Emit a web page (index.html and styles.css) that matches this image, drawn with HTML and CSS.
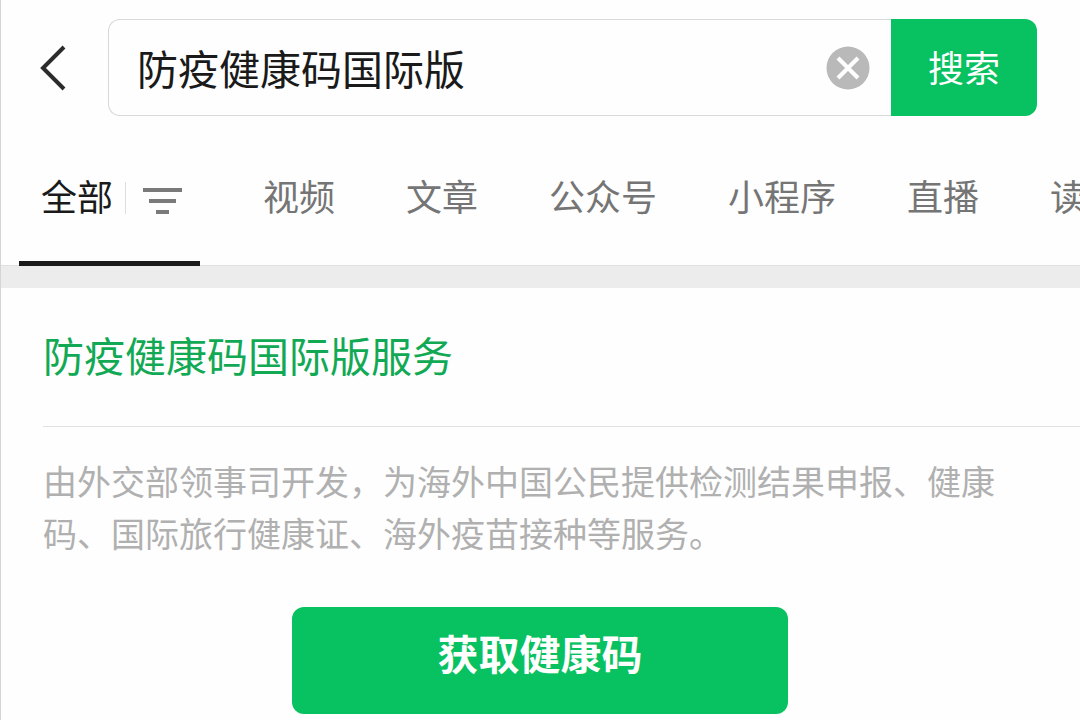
FILE: index.html
```
<!DOCTYPE html>
<html lang="zh-CN">
<head>
    <meta charset="UTF-8">
    <meta name="viewport" content="width=device-width, initial-scale=1.0">
    <title>防疫健康码国际版</title>
    <link rel="stylesheet" href="styles.css">
</head>
<body>
    <!-- Search bar -->
    <header class="header">
        <button class="back" type="button" aria-label="返回">
            <svg width="28" height="48" viewBox="0 0 28 48" fill="none" stroke="#2b2b2b" stroke-width="4">
                <path d="M26 3 L5 24 L26 45"/>
            </svg>
        </button>
        <form class="search">
            <div class="search-box">
                <input class="search-input" type="text" aria-label="搜索" value="防疫健康码国际版">
                <button class="clear" type="button" aria-label="清除">
                    <svg width="44" height="44" viewBox="0 0 44 44">
                        <circle cx="22" cy="22" r="21.5" fill="#b9b9b9"/>
                        <path d="M12 12 L32 32 M32 12 L12 32" stroke="#fff" stroke-width="4"/>
                    </svg>
                </button>
            </div>
            <button class="search-btn" type="button">搜索</button>
        </form>
    </header>

    <!-- Tabs -->
    <nav class="tabs">
        <a class="tab active" href="#">
            <span>全部</span>
            <span class="divider"></span>
            <svg width="39" height="26" viewBox="0 0 39 26" fill="#7a7a7a">
                <rect x="0" y="0" width="39" height="4"/>
                <rect x="6" y="11" width="27" height="4"/>
                <rect x="13" y="22" width="13" height="4"/>
            </svg>
        </a>
        <a class="tab" href="#">视频</a>
        <a class="tab" href="#">文章</a>
        <a class="tab" href="#">公众号</a>
        <a class="tab" href="#">小程序</a>
        <a class="tab" href="#">直播</a>
        <a class="tab" href="#">读书</a>
    </nav>

    <!-- Result -->
    <main class="results">
        <section class="card">
            <h2 class="card-title"><a href="#">防疫健康码国际版服务</a></h2>
            <div class="card-body">
                <p class="card-desc">由外交部领事司开发，为海外中国公民提供检测结果申报、健康码、国际旅行健康证、海外疫苗接种等服务。</p>
                <button class="card-btn" type="button">获取健康码</button>
            </div>
        </section>
    </main>
</body>
</html>
```
FILE: styles.css
```
* {
    box-sizing: border-box;
}

body {
    font-family: "Noto Sans CJK SC", sans-serif;
    background-color: #fefefe;
    color: #1a1a1a;
    margin: 0;
    min-height: 100vh;
    border-left: 1px solid #d4d4d4;
    overflow-x: hidden;
}

button {
    font-family: inherit;
    border: none;
    padding: 0;
    cursor: pointer;
}

a {
    color: inherit;
    text-decoration: none;
}

svg {
    display: block;
}

.header {
    display: flex;
    padding: 19px 43px 0 37px;
}

.back {
    width: 70px;
    background: none;
}

.search {
    flex: 1;
    display: flex;
    height: 97px;
}

.search-box {
    flex: 1;
    min-width: 0;
    display: flex;
    align-items: center;
    padding: 0 21px 0 28px;
    border: 1px solid #d8d8d8;
    border-right: none;
    border-radius: 12px 0 0 12px;
}

.search-input {
    flex: 1;
    min-width: 0;
    height: 60px;
    padding: 0 0 2px;
    border: none;
    outline: none;
    background: none;
    font-family: inherit;
    font-size: 41px;
    color: #1a1a1a;
}

.clear {
    background: none;
}

.search-btn {
    width: 146px;
    padding-bottom: 4px;
    background-color: #08c160;
    color: white;
    font-size: 36px;
    border-radius: 0 12px 12px 0;
}

/* sits over the top line of the results block */
.tabs {
    display: flex;
    gap: 71px;
    position: relative;
    padding-left: 18px;
    overflow: hidden;
    font-size: 36px;
    line-height: 36px;
    color: #757575;
    white-space: nowrap;
}

.tab {
    flex-shrink: 0;
    padding: 61px 0 53px;
}

.tab.active {
    display: flex;
    align-items: center;
    margin-right: -8px;
    padding: 60px 18px 47px 22px;
    border-bottom: 5px solid #1a1a1a;
    color: #1a1a1a;
}

.tab.active svg {
    margin-top: 12px;
}

.divider {
    width: 1px;
    height: 32px;
    margin: 6px 17px 0 12px;
    background-color: #dedede;
}

.results {
    margin-top: -1px;
    border-top: 1px solid #e0e0e0;
}

.card {
    border-top: 22px solid #ececec;
    padding-left: 42px;
}

.card-title {
    margin: 0;
    padding: 36px 0 42px;
    border-bottom: 1px solid #e2e2e2;
    font-size: 41px;
    line-height: 60px;
    font-weight: 400;
    color: #12a955;
}

.card-body {
    padding-right: 43px;
}

.card-desc {
    margin: 0;
    padding: 28px 38px 48px 0;
    font-size: 34px;
    line-height: 52px;
    color: #b0b0b0;
}

.card-btn {
    display: block;
    width: 100%;
    max-width: 496px;
    margin: 0 auto;
    padding: 15px 0 32px;
    background-color: #08c160;
    color: white;
    font-size: 41px;
    line-height: 60px;
    font-weight: 700;
    border-radius: 12px;
}
```
